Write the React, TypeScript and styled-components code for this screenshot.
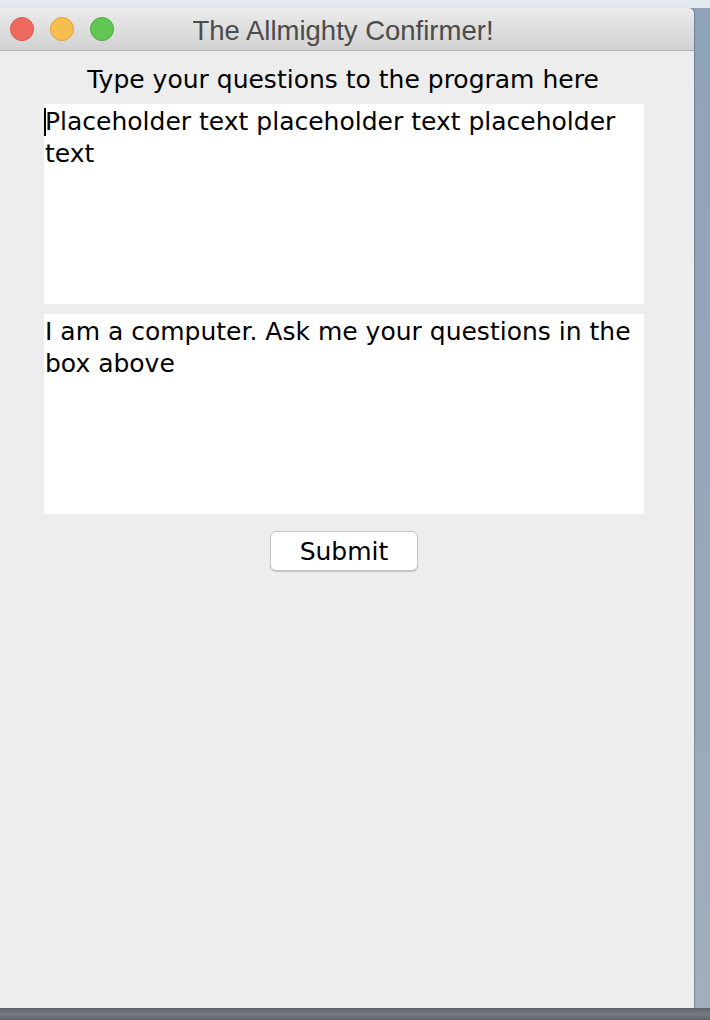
import React from "react";
import styled, { createGlobalStyle } from "styled-components";

const Global = createGlobalStyle`
  html, body { margin: 0; padding: 0; }
  body {
    width: 710px;
    height: 1020px;
    overflow: hidden;
    background:
      linear-gradient(180deg, #e3e9f1 0px, #e3e9f1 8px, transparent 8px),
      linear-gradient(180deg, transparent 1008px, #5b6069 1008px, #767b83 1014px, #5d626a 1020px),
      linear-gradient(180deg, #8ea2b9 0%, #98a9bb 60%, #a2aebb 100%);
  }
`;

const Desktop = styled.div`
  display: flex;
  align-items: flex-start;
  padding-top: 8px;
  width: 710px;
  height: 1020px;
  box-sizing: border-box;
`;

const Window = styled.div`
  margin-left: -8px;
  width: 702px;
  height: 1000px;
  display: flex;
  flex-direction: column;
  background: #ededed;
  border-top-left-radius: 6px;
  border-top-right-radius: 6px;
  overflow: hidden;
  box-shadow: 1px 0 1px rgba(60, 70, 90, 0.35);
`;

const TitleBar = styled.div`
  position: relative;
  height: 42px;
  flex: none;
  display: flex;
  align-items: center;
  justify-content: center;
  background: linear-gradient(180deg, #ececec 0%, #dedede 50%, #d2d2d2 100%);
  border-bottom: 1px solid #b4b4b4;
`;

const Lights = styled.div`
  position: absolute;
  left: 18px;
  top: 9px;
  display: flex;
  gap: 16px;
`;

const Light = styled.span<{ $fill: string; $edge: string }>`
  width: 24px;
  height: 24px;
  border-radius: 50%;
  box-sizing: border-box;
  background: ${(p) => p.$fill};
  border: 1px solid ${(p) => p.$edge};
`;

const Title = styled.div`
  font-family: "Liberation Sans", Arial, sans-serif;
  font-size: 27.5px;
  color: #4b4b4b;
  line-height: 1;
  padding-top: 4px;
`;

const Content = styled.div`
  display: flex;
  flex-direction: column;
  align-items: center;
  padding-top: 13px;
  padding-left: 2px;
  font-family: "DejaVu Sans", Verdana, sans-serif;
  color: #000;
`;

const Label = styled.div`
  font-size: 25px;
  line-height: 32px;
  height: 40px;
  margin-left: -2px;
`;

const Area = styled.div`
  position: relative;
  width: 600px;
  height: 200px;
  box-sizing: border-box;
  background: #fff;
  padding: 2px 0 0 1px;
  font-size: 25px;
  line-height: 32px;
  white-space: pre-wrap;
  & + & {
    margin-top: 10px;
  }
`;

const Caret = styled.span`
  position: absolute;
  left: 0;
  top: 4px;
  width: 2px;
  height: 28px;
  background: #000;
`;

const Button = styled.button`
  margin-top: 17px;
  width: 148px;
  height: 40px;
  background: #fff;
  border: 1px solid #c4c4c4;
  border-radius: 6px;
  box-shadow: 0 1px 1px rgba(0, 0, 0, 0.18);
  font-family: "DejaVu Sans", Verdana, sans-serif;
  font-size: 25px;
  color: #000;
  padding: 0;
  line-height: 1;
`;

export default function App() {
  return (
    <>
      <Global />
      <Desktop>
        <Window>
          <TitleBar>
            <Lights>
              <Light $fill="#ee6a5f" $edge="#d9564c" />
              <Light $fill="#f6be4f" $edge="#dea235" />
              <Light $fill="#62c655" $edge="#4ca93f" />
            </Lights>
            <Title>The Allmighty Confirmer!</Title>
          </TitleBar>
          <Content>
            <Label>Type your questions to the program here</Label>
            <Area>
              <Caret />
              {"Placeholder text placeholder text placeholder\ntext"}
            </Area>
            <Area>{"I am a computer. Ask me your questions in the\nbox above"}</Area>
            <Button>Submit</Button>
          </Content>
        </Window>
      </Desktop>
    </>
  );
}
